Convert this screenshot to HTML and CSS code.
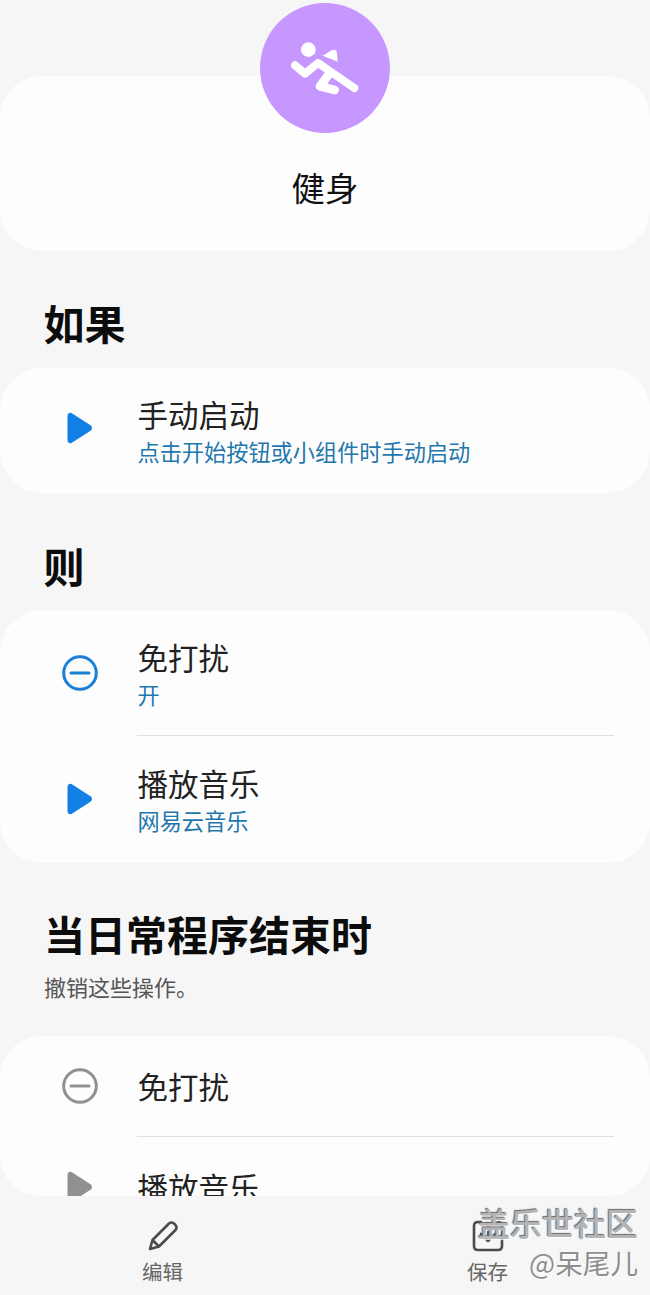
FILE: index.html
```html
<!DOCTYPE html>
<html lang="zh-CN">
<head>
<meta charset="utf-8">
<title>健身</title>
<link rel="stylesheet" href="styles.css">
</head>
<body>
<div class="screen">
  <main class="scroller">
    <section class="card hero-card"><h1 class="hero-name">健身</h1></section>
    <div class="hero-badge">
      <svg viewBox="90 10 390 390" width="130" height="130">
        <circle cx="285" cy="205" r="195" fill="#c597ff"/>
        <circle cx="235" cy="150" r="22" fill="#fff"/>
        <path d="M278 168 L305 152 Q318 146 321 160 L323 186 Z" fill="#fff"/>
        <path d="M195 197 L225 222 L264 190 L373 265" fill="none" stroke="#fff" stroke-width="24" stroke-linecap="round" stroke-linejoin="round"/>
        <path d="M298 222 L270 260 L314 271" fill="none" stroke="#fff" stroke-width="26" stroke-linecap="round" stroke-linejoin="round"/>
      </svg>
    </div>

    <h2 class="section-title title-if">如果</h2>
    <section class="card">
      <div class="row row-tall row-single">
        <span class="row-icon"><svg viewBox="0 0 26 32" width="26" height="32"><path d="M4.5 1 L23.5 13.2 Q26.5 16 23.5 18.8 L4.5 31 Q1 32 .5 28 V4 Q1 0 4.5 1 Z" fill="#127fe6"/></svg></span>
        <div class="row-text"><div class="row-title">手动启动</div><div class="row-sub">点击开始按钮或小组件时手动启动</div></div>
      </div>
    </section>

    <h2 class="section-title title-then">则</h2>
    <section class="card">
      <div class="row row-tall">
        <span class="row-icon"><svg viewBox="0 0 36 36" width="36" height="36"><circle cx="18" cy="18" r="16.3" fill="none" stroke="#1a7fd6" stroke-width="3"/><path d="M9 18 H27" stroke="#1a7fd6" stroke-width="3" stroke-linecap="round"/></svg></span>
        <div class="row-text"><div class="row-title">免打扰</div><div class="row-sub">开</div></div>
      </div>
      <div class="divider"></div>
      <div class="row row-tall row-last">
        <span class="row-icon"><svg viewBox="0 0 26 32" width="26" height="32"><path d="M4.5 1 L23.5 13.2 Q26.5 16 23.5 18.8 L4.5 31 Q1 32 .5 28 V4 Q1 0 4.5 1 Z" fill="#127fe6"/></svg></span>
        <div class="row-text"><div class="row-title">播放音乐</div><div class="row-sub">网易云音乐</div></div>
      </div>
    </section>

    <div class="end-head">
      <h2 class="end-title">当日常程序结束时</h2>
      <p class="end-note">撤销这些操作。</p>
    </div>
    <section class="card">
      <div class="row row-plain">
        <span class="row-icon"><svg viewBox="0 0 36 36" width="36" height="36"><circle cx="18" cy="18" r="16.3" fill="none" stroke="#909090" stroke-width="3"/><path d="M9 18 H27" stroke="#909090" stroke-width="3" stroke-linecap="round"/></svg></span>
        <div class="row-text"><div class="row-title">免打扰</div></div>
      </div>
      <div class="divider"></div>
      <div class="row row-plain">
        <span class="row-icon"><svg viewBox="0 0 26 32" width="26" height="32"><path d="M4.5 1 L23.5 13.2 Q26.5 16 23.5 18.8 L4.5 31 Q1 32 .5 28 V4 Q1 0 4.5 1 Z" fill="#909090"/></svg></span>
        <div class="row-text"><div class="row-title">播放音乐</div></div>
      </div>
    </section>
  </main>

  <nav class="bottom-bar">
    <div class="bar-item">
      <svg viewBox="0 0 32 32" width="32" height="32"><path d="M3 29 L5.5 20 L22 3.5 Q24.5 1.5 27 3.5 L28.5 5 Q30.5 7.5 28.5 10 L12 26.5 Z M5.5 20 L12 26.5" fill="none" stroke="#4b4b4b" stroke-width="2.6" stroke-linejoin="round"/></svg>
      <span class="bar-label">编辑</span>
    </div>
    <div class="bar-item">
      <svg viewBox="0 0 32 32" width="32" height="32"><path d="M10 2 H6 Q2 2 2 6 V26 Q2 30 6 30 H26 Q30 30 30 26 V6 Q30 2 26 2 H22" fill="none" stroke="#4b4b4b" stroke-width="2.6"/><path d="M16 3 V20 M9 14 L16 21 L23 14" fill="none" stroke="#4b4b4b" stroke-width="2.6" stroke-linecap="round" stroke-linejoin="round"/></svg>
      <span class="bar-label">保存</span>
    </div>
  </nav>

  <div class="watermark">
    <div class="wm-main">盖乐世社区</div>
    <div class="wm-sub">@呆尾儿</div>
  </div>
</div>
</body>
</html>
```
FILE: styles.css
```css
* { box-sizing: border-box; }
html, body { margin: 0; padding: 0; }
body {
  background: #f6f6f6;
  color: #1c1c1c;
  font-family: "Noto Sans CJK SC", "Noto Sans", sans-serif;
}
.screen {
  position: relative;
  width: 650px;
  height: 1295px;
  overflow: hidden;
  display: flex;
  flex-direction: column;
}
.scroller {
  position: relative;
  height: 1196px;
  flex: none;
  overflow: hidden;
  padding-top: 76px;
  border-radius: 0 0 40px 40px;
}
.card {
  background: #fdfdfd;
  border-radius: 42px;
}
.hero-card {
  height: 175px;
  display: flex;
  align-items: flex-end;
  justify-content: center;
  padding-bottom: 41px;
}
.hero-name {
  margin: 0;
  font-size: 33.5px;
  line-height: 46px;
  font-weight: 400;
  color: #111;
}
.hero-badge {
  position: absolute;
  left: 260px;
  top: 3px;
  width: 130px;
  height: 130px;
}
.hero-badge svg { display: block; }
.section-title {
  margin: 0;
  height: 117px;
  padding: 46px 0 0 43.5px;
  font-size: 41px;
  line-height: 50px;
  font-weight: 700;
  color: #0c0c0c;
}
.title-then { padding-top: 47px; }
.row {
  display: flex;
  align-items: center;
}
.row-tall { height: 125px; }
.row-last { height: 127px; padding-bottom: 2px; }
.row-plain { height: 100px; }
.row-single { padding-bottom: 2px; }
.row-single .row-icon { padding-bottom: 4px; }
.row-icon {
  width: 137.5px;
  flex: none;
  display: flex;
  justify-content: center;
  padding-left: 22px;
}
.row-icon svg { flex: none; display: block; }
.row-text { display: flex; flex-direction: column; gap: 2px; }
.row-title {
  font-size: 30.5px;
  line-height: 40px;
  color: #222;
}
.row-sub {
  font-size: 22.2px;
  line-height: 30px;
  color: #1f77ad;
}
.divider {
  height: 1px;
  margin: 0 36px 0 137px;
  background: #dfdfdf;
}
.end-head {
  height: 173px;
  padding: 45px 0 0 44px;
}
.end-title {
  margin: 0;
  font-size: 41px;
  line-height: 50px;
  font-weight: 700;
  color: #0c0c0c;
}
.end-note {
  margin: 13px 0 0;
  font-size: 22px;
  line-height: 30px;
  color: #555;
}
.bottom-bar {
  flex: 1;
  display: grid;
  grid-template-columns: 1fr 1fr;
}
.bar-item {
  display: flex;
  flex-direction: column;
  align-items: center;
  padding-top: 24px;
}
.bar-item svg { display: block; }
.bar-label {
  margin-top: 4px;
  font-size: 20.5px;
  line-height: 30px;
  color: #666;
}
.watermark {
  position: absolute;
  right: 12px;
  bottom: 14px;
  text-align: right;
}
.wm-main {
  font-size: 32px;
  line-height: 41px;
  font-weight: 500;
  color: #b4b4b4;
  text-shadow: -1px -1px 1px #6a6a6a, 1px 1px 1px #fff;
}
.wm-sub {
  font-size: 27.6px;
  line-height: 38px;
  color: #8e8e8e;
  text-shadow: 1px 1px 1px #fff;
}
```
